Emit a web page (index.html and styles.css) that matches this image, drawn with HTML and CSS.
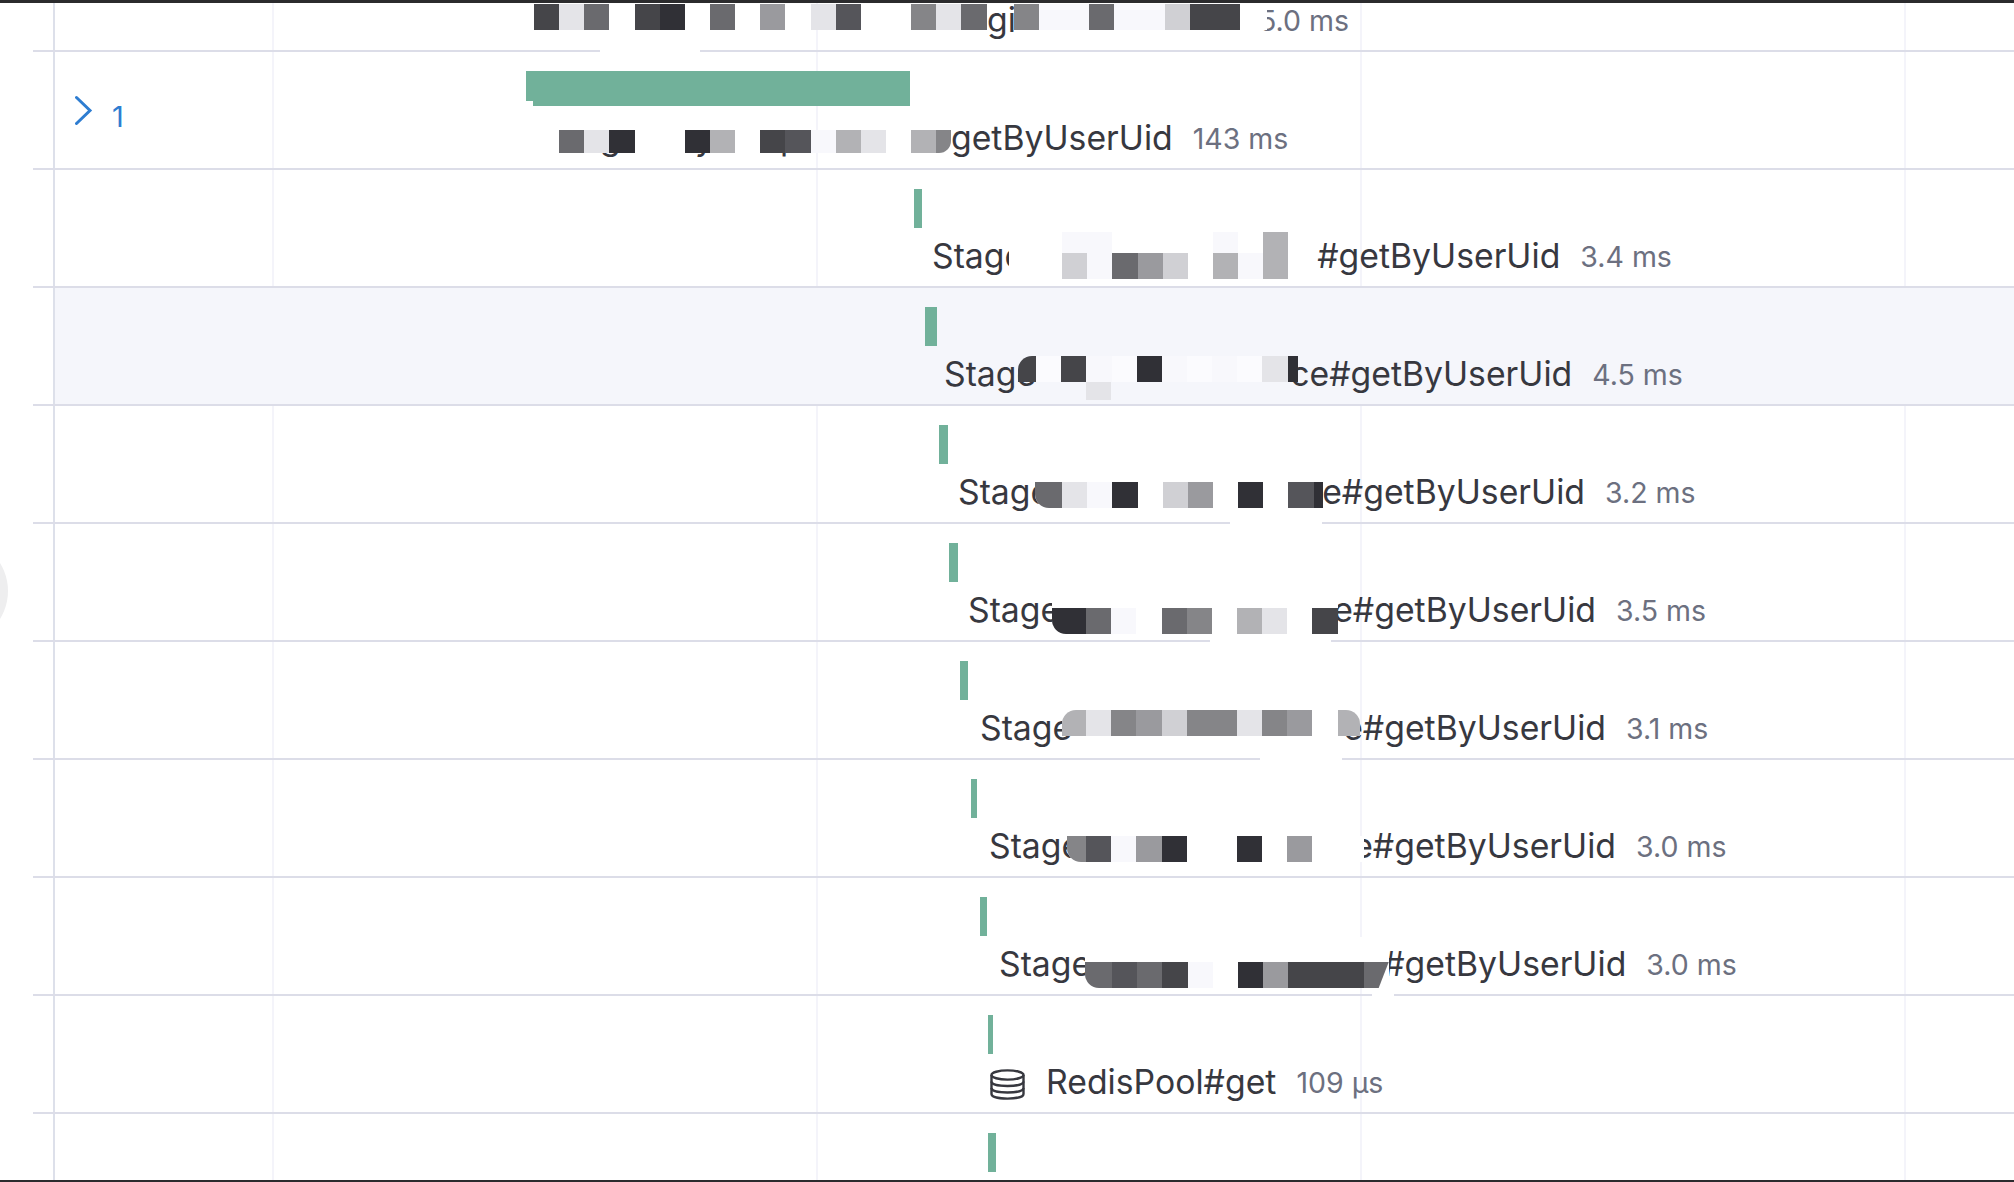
FILE: index.html

```html
<!DOCTYPE html>
<html>
<head>
    <title>Trace timeline</title>
    <meta charset="UTF-8">
    <link rel="stylesheet" href="styles.css">
</head>
<body>
    <div class="frame">
        <div class="edge-dot"></div>
        <div class="trace">

            <div class="row">
                <div class="row-body">
                    <div class="head"></div>
                    <div class="chart">
                        <div class="bar" style="margin-left:253px;width:300px"></div>
                        <div class="label" style="margin-left:261px">
                            <div class="mosaic top-3" style="width:453px">
                                <div class="strip"><i class="s8"></i><i class="s1"></i><i class="s6"></i><i></i><i class="s8"></i><i class="s9"></i><i></i><i class="s6"></i><i></i><i class="s4"></i><i></i><i class="s1"></i><i class="s7"></i><i></i><i></i><i class="s5"></i><i class="s1"></i><i class="s6"></i></div>
                            </div>
                            <span class="name">gi</span>
                            <div class="mosaic top-3 cut" style="width:253px;margin-left:-2px">
                                <div class="strip"><i class="s5"></i><i class="s0"></i><i class="s0"></i><i class="s6"></i><i class="s0"></i><i class="s0"></i><i class="s2"></i><i class="s8"></i><i class="s8"></i></div>
                            </div>
                            <span class="dur">5.0 ms</span>
                        </div>
                    </div>
                </div>
                <div class="wipe" style="left:567px;width:100px"></div>
            </div>

            <div class="row">
                <div class="row-body">
                    <div class="head">
                        <svg class="chevron" viewBox="0 0 18 30"><path d="M1.5 2.5 L15 15.5 L1.5 28.5"></path></svg>
                        <span class="count">1</span>
                    </div>
                    <div class="chart">
                        <div class="bar bar-clipped" style="margin-left:253px;width:384px"></div>
                        <div class="label" style="margin-left:261px">
                            <div class="mosaic top-11 short" style="width:417px">
                                <span class="frag" style="left:66px">g</span>
                                <span class="frag" style="left:161px">y</span>
                                <span class="frag" style="left:246px">p</span>
                                <div class="strip"><i></i><i class="s6"></i><i class="s1"></i><i class="s9"></i><i></i><i></i><i class="s9"></i><i class="s3"></i><i></i><i class="s8"></i><i class="s7"></i><i class="s0"></i><i class="s3"></i><i class="s1"></i><i></i><i class="s3"></i><i class="s5" style="width:15px"></i></div>
                            </div>
                            <span class="name">getByUserUid</span>
                            <span class="dur">143 ms</span>
                        </div>
                    </div>
                </div>
            </div>

            <div class="row">
                <div class="row-body">
                    <div class="head"></div>
                    <div class="chart">
                        <div class="bar" style="margin-left:640.5px;width:8.5px"></div>
                        <div class="label" style="margin-left:659px">
                            <span class="name">Stage</span>
                            <div class="mosaic top-up5" style="width:308px;margin-left:-15px">
                                <div class="strip strip-top"><i style="width:53px"></i><i class="s0"></i><i class="s0"></i><i></i><i></i><i></i><i></i><i class="s0"></i><i></i><i class="s3"></i></div>
                                <div class="strip"><i style="width:53px"></i><i class="s2"></i><i class="s0"></i><i class="s6"></i><i class="s4"></i><i class="s2"></i><i></i><i class="s3"></i><i class="s0"></i><i class="s3"></i></div>
                            </div>
                            <span class="name">#getByUserUid</span>
                            <span class="dur">3.4 ms</span>
                        </div>
                    </div>
                </div>
            </div>

            <div class="row row-active">
                <div class="row-body">
                    <div class="head"></div>
                    <div class="chart">
                        <div class="bar" style="margin-left:651.5px;width:12px"></div>
                        <div class="label" style="margin-left:671px">
                            <span class="name">Stage</span>
                            <div class="mosaic top-1 tl" style="width:280px;margin-left:-18px;margin-right:-8px">
                                <div class="strip"><i class="s8" style="width:18px"></i><i></i><i class="s8"></i><i class="s0"></i><i></i><i class="s9"></i><i class="s0"></i><i></i><i class="s0"></i><i></i><i class="s1"></i><i class="s9"></i></div>
                                <div class="strip strip-low"><i style="width:68px"></i><i class="s1"></i></div>
                            </div>
                            <span class="name">ce#getByUserUid</span>
                            <span class="dur">4.5 ms</span>
                        </div>
                    </div>
                </div>
            </div>

            <div class="row">
                <div class="row-body">
                    <div class="head"></div>
                    <div class="chart">
                        <div class="bar" style="margin-left:666px;width:8.5px"></div>
                        <div class="label" style="margin-left:685px">
                            <span class="name">Stage</span>
                            <div class="mosaic top-9 bl" style="width:288px;margin-left:-15px;margin-right:-1px">
                                <div class="strip"><i class="s6" style="width:27px"></i><i class="s1"></i><i class="s0"></i><i class="s9"></i><i></i><i class="s2"></i><i class="s4"></i><i></i><i class="s9"></i><i></i><i class="s7"></i><i class="s9"></i></div>
                            </div>
                            <span class="name">e#getByUserUid</span>
                            <span class="dur">3.2 ms</span>
                        </div>
                    </div>
                </div>
                <div class="wipe" style="left:1197px;width:92px"></div>
            </div>

            <div class="row">
                <div class="row-body">
                    <div class="head"></div>
                    <div class="chart">
                        <div class="bar" style="margin-left:675.5px;width:9.5px"></div>
                        <div class="label" style="margin-left:695px">
                            <span class="name">Stage</span>
                            <div class="mosaic top-up4 bl" style="width:286px;margin-left:-8px;margin-right:-5px">
                                <div class="strip strip-top"></div>
                                <div class="strip"><i class="s9" style="width:34px"></i><i class="s6"></i><i class="s0"></i><i></i><i class="s6"></i><i class="s5"></i><i></i><i class="s3"></i><i class="s1"></i><i></i><i class="s8"></i></div>
                            </div>
                            <span class="name">e#getByUserUid</span>
                            <span class="dur">3.5 ms</span>
                        </div>
                    </div>
                </div>
                <div class="wipe" style="left:1177px;width:121px"></div>
            </div>

            <div class="row">
                <div class="row-body">
                    <div class="head"></div>
                    <div class="chart">
                        <div class="bar" style="margin-left:686.5px;width:8.5px"></div>
                        <div class="label" style="margin-left:707px">
                            <span class="name">Stage</span>
                            <div class="mosaic top-1 tl tr" style="width:298px;margin-left:-10px;margin-right:-17px">
                                <div class="strip"><i class="s3" style="width:24px"></i><i class="s1"></i><i class="s5"></i><i class="s4"></i><i class="s2"></i><i class="s5"></i><i class="s5"></i><i class="s1"></i><i class="s5"></i><i class="s4"></i><i></i><i class="s3"></i></div>
                            </div>
                            <span class="name">e#getByUserUid</span>
                            <span class="dur">3.1 ms</span>
                        </div>
                    </div>
                </div>
                <div class="wipe" style="left:1227px;width:82px"></div>
            </div>

            <div class="row">
                <div class="row-body">
                    <div class="head"></div>
                    <div class="chart">
                        <div class="bar" style="margin-left:697.5px;width:6.5px"></div>
                        <div class="label" style="margin-left:716px">
                            <span class="name">Stage</span>
                            <div class="mosaic top-9 bl" style="width:297px;margin-left:-14px;margin-right:-11px">
                                <div class="strip"><i class="s5" style="width:19px"></i><i class="s7"></i><i class="s0"></i><i class="s4"></i><i class="s9"></i><i></i><i></i><i class="s9"></i><i></i><i class="s4"></i></div>
                            </div>
                            <span class="name">e#getByUserUid</span>
                            <span class="dur">3.0 ms</span>
                        </div>
                    </div>
                </div>
            </div>

            <div class="row">
                <div class="row-body">
                    <div class="head"></div>
                    <div class="chart">
                        <div class="bar" style="margin-left:707px;width:7px"></div>
                        <div class="label" style="margin-left:726px">
                            <span class="name">Stage</span>
                            <div class="mosaic top-up8 bl" style="width:304px;margin-left:-6px;margin-right:-6px">
                                <div class="strip strip-tall"></div>
                                <div class="strip"><i class="s6" style="width:27px"></i><i class="s7"></i><i class="s6"></i><i class="s8"></i><i class="s0"></i><i></i><i class="s9"></i><i class="s4"></i><i class="s8"></i><i class="s8"></i><i class="s8"></i><i class="s6 slant"></i></div>
                            </div>
                            <span class="name">#getByUserUid</span>
                            <span class="dur">3.0 ms</span>
                        </div>
                    </div>
                </div>
                <div class="wipe" style="left:1339px;width:22px"></div>
            </div>

            <div class="row">
                <div class="row-body">
                    <div class="head"></div>
                    <div class="chart">
                        <div class="bar" style="margin-left:715px;width:5px"></div>
                        <div class="label" style="margin-left:717px">
                            <svg class="db-icon" viewBox="0 0 35 31">
                                <ellipse cx="17.5" cy="6" rx="16" ry="4.6"></ellipse>
                                <path d="M1.5 6 V25 C1.5 28 9 29.6 17.5 29.6 S33.5 28 33.5 25 V6"></path>
                                <path d="M1.5 12.5 C1.5 15.5 9 17 17.5 17 S33.5 15.5 33.5 12.5"></path>
                                <path d="M1.5 19 C1.5 22 9 23.5 17.5 23.5 S33.5 22 33.5 19"></path>
                            </svg>
                            <span class="name">RedisPool#get</span>
                            <span class="dur">109 µs</span>
                        </div>
                    </div>
                </div>
            </div>

            <div class="row">
                <div class="row-body">
                    <div class="head"></div>
                    <div class="chart">
                        <div class="bar" style="margin-left:715px;width:7.5px"></div>
                    </div>
                </div>
            </div>

        </div>
    </div>
</body>
</html>
```

FILE: styles.css

```css
body {
    margin: 0;
    background-color: white;
    font-family: Inter, "Liberation Sans", sans-serif;
}
.frame {
    position: relative;
    height: 1182px;
    box-sizing: border-box;
    border-top: 3px solid #2b2b2d;
    border-bottom: 2px solid #2b2b2d;
    overflow: hidden;
}
.edge-dot {
    position: absolute;
    left: -98px;
    top: 535px;
    width: 106px;
    height: 106px;
    border-radius: 50%;
    background-color: #eeeeef;
}
.trace {
    margin-top: -69px;
    margin-left: 33px;
    background-image: linear-gradient(to right, #f4f4fa 2px, transparent 2px);
    background-size: 544px 100%;
    background-position: 239px 0;
}
.row {
    position: relative;
    height: 118px;
    box-sizing: border-box;
    padding-left: 20px;
    border-bottom: 2px solid #dcdde8;
}
.row-body {
    display: flex;
    height: 116px;
    border-left: 2px solid #dde0ea;
    margin-bottom: -2px;
}
.row-active .row-body {
    background-color: #f5f6fb;
}
.head {
    display: flex;
    align-items: flex-start;
    flex: 0 0 218px;
    box-sizing: border-box;
    padding: 43px 0 0 20px;
    color: #2e7dd1;
}
.chevron {
    width: 18px;
    height: 30px;
    fill: none;
    stroke: #2e7dd1;
    stroke-width: 3;
    stroke-linecap: round;
}
.count {
    margin-left: 19px;
    margin-top: 2px;
    font-size: 29px;
    line-height: 40px;
}
.chart {
    flex: 1;
    padding-top: 19px;
    min-width: 0;
}
.bar {
    position: relative;
    height: 39px;
    background-color: #71b19a;
}
.bar-clipped {
    height: 35px;
    margin-bottom: 13px;
}
.bar-clipped::after {
    content: "";
    position: absolute;
    left: 0;
    bottom: 0;
    width: 7px;
    height: 5px;
    background-color: white;
}
.label {
    display: flex;
    align-items: flex-start;
    margin-top: 9px;
    height: 40px;
    white-space: nowrap;
}
.name {
    font-size: 33.75px;
    line-height: 38px;
    color: #37383f;
}
.dur {
    margin-left: 20px;
    font-size: 28.5px;
    line-height: 40px;
    color: #6c7080;
}
.cut + .dur {
    margin-left: -8px;
}
.db-icon {
    flex: 0 0 35px;
    height: 31px;
    margin-top: 6px;
    margin-right: 21px;
    fill: none;
    stroke: #37383f;
    stroke-width: 2.4;
}

/* redacted parts of the span names */
.mosaic {
    position: relative;
    z-index: 1;
    flex: none;
    overflow: hidden;
    background-color: white;
}
.row-active .mosaic {
    background-color: transparent;
}
.row-active .strip:first-child {
    background-color: #fbfbfe;
}
.tl { border-top-left-radius: 14px; }
.tr { border-top-right-radius: 14px; }
.bl { border-bottom-left-radius: 14px; }
.top-1 { margin-top: 1px; }
.top-3 { margin-top: 3px; }
.top-9 { margin-top: 9px; }
.top-11 { margin-top: 11px; }
.top-up4 { margin-top: -4px; }
.top-up5 { margin-top: -5px; }
.top-up8 { margin-top: -8px; }
.strip {
    position: relative;
    display: flex;
    height: 26px;
}
.short {
    height: 23px;
    overflow: visible;
    background-color: transparent;
}
.short .strip {
    height: 23px;
    background-color: white;
    border-bottom-right-radius: 12px;
    overflow: hidden;
}
.frag {
    position: absolute;
    top: -11px;
    font-size: 33.75px;
    line-height: 38px;
    color: #37383f;
}
.strip-top {
    height: 21px;
}
.strip-low {
    height: 18px;
}
.strip-tall {
    height: 25px;
}
.strip i {
    flex: none;
    width: 25.15px;
}
.strip .slant {
    clip-path: polygon(0 0, 100% 0, 60% 100%, 0 100%);
}
.s0 { background-color: #f8f8fc; }
.s1 { background-color: #e4e4e8; }
.s2 { background-color: #d0d0d4; }
.s3 { background-color: #b2b2b5; }
.s4 { background-color: #9a9a9e; }
.s5 { background-color: #858588; }
.s6 { background-color: #6a6a6e; }
.s7 { background-color: #55555a; }
.s8 { background-color: #454549; }
.s9 { background-color: #303036; }

/* smudges where the redaction ran over a row line */
.wipe {
    position: absolute;
    bottom: -3px;
    height: 4px;
    background-color: white;
}
```
